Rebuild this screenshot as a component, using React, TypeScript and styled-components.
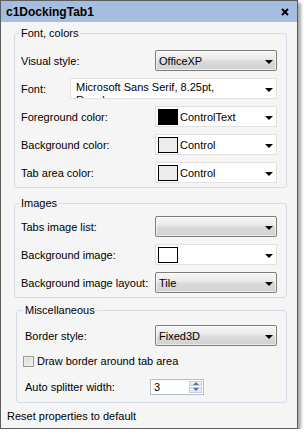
import styled, {createGlobalStyle} from "styled-components";

const GlobalStyle = createGlobalStyle`
  body {
    margin: 0;
    background: #ffffff;
    font-family: "Liberation Sans", Arial, sans-serif;
    font-size: 11px;
    color: #000;
  }
`;

const Window = styled.div`
  width: 298px;
  height: 429px;
  box-sizing: border-box;
  border: 1px solid #5c5c5c;
  background: #f5f5f5;
  box-shadow: 3px 3px 3px rgba(0, 0, 0, 0.35);
  display: flex;
  flex-direction: column;
`;

const TitleBar = styled.div`
  height: 21px;
  flex: none;
  background: #a5bddf;
  display: flex;
  align-items: center;
  justify-content: space-between;
  padding: 0 8px 0 5px;
  font-weight: bold;
  font-size: 12px;
`;

const CloseIcon = () => (
  <svg width="8" height="8" viewBox="0 0 8 8">
    <path d="M1 1 L7 7 M7 1 L1 7" stroke="#000" strokeWidth="2" />
  </svg>
);

const Content = styled.div`
  padding: 4px 10px 0 13px;
`;

const Group = styled.fieldset<{$top: number; $pt: number; $pb: number; $indent?: number}>`
  margin: ${(p) => p.$top}px 0 0 ${(p) => p.$indent ?? 0}px;
  min-inline-size: 0;
  border: 1px solid #d3dce7;
  border-radius: 3px;
  padding: ${(p) => p.$pt}px 9px ${(p) => p.$pb}px
    ${(p) => 6 + (p.$indent ?? 0)}px;
  display: flex;
  flex-direction: column;
  gap: 7px;
`;

const Legend = styled.legend`
  padding: 0 2px;
  margin-left: -2px;
  line-height: 14px;
`;

const Row = styled.div<{$h?: number}>`
  height: ${(p) => p.$h ?? 21}px;
  display: flex;
  align-items: center;
  justify-content: space-between;
`;

const Label = styled.span`
  white-space: nowrap;
`;

const Arrow = styled.span`
  position: absolute;
  right: 3px;
  top: 50%;
  margin-top: -1px;
  width: 0;
  height: 0;
  border-left: 4px solid transparent;
  border-right: 4px solid transparent;
  border-top: 4px solid #000;
`;

const Combo = styled.div<{$w?: number}>`
  position: relative;
  width: ${(p) => p.$w ?? 122}px;
  height: 21px;
  box-sizing: border-box;
  border: 1px solid #7d7d7d;
  border-radius: 2px;
  background: linear-gradient(#f7f7f7, #e8e8e8 45%, #dadada 55%, #d2d2d2);
  box-shadow: inset 0 0 0 1px rgba(255, 255, 255, 0.6);
  display: flex;
  align-items: center;
  padding-left: 3px;
  padding-right: 18px;
`;

const FlatCombo = styled(Combo)`
  border: 1px solid #e1e1e1;
  border-radius: 0;
  background: #ffffff;
  box-shadow: none;
  padding-left: 2px;
`;

const FontText = styled.div`
  height: 19px;
  overflow: hidden;
  padding: 2px 0 0 3px;
  box-sizing: border-box;
  align-self: flex-start;
  line-height: 13px;
`;

const Swatch = styled.span<{$color: string}>`
  width: 20px;
  height: 16px;
  box-sizing: border-box;
  border: 1px solid #000;
  background: ${(p) => p.$color};
  margin-right: 2px;
  flex: none;
`;

const CheckRow = styled.label`
  height: 16px;
  display: flex;
  align-items: center;
  margin-left: -2px;
  gap: 3px;
`;

const CheckBox = styled.span`
  width: 11px;
  height: 11px;
  box-sizing: border-box;
  border: 1px solid #9a9a9a;
  background: linear-gradient(135deg, #d6d6d6, #f4f4f4);
  box-shadow: inset 0 0 0 1px #ececec;
`;

const Spinner = styled.div`
  width: 54px;
  height: 16px;
  box-sizing: border-box;
  border: 1px solid #b4bfcc;
  background: #fff;
  display: flex;
  margin-right: 73px;
`;

const SpinValue = styled.span`
  flex: 1;
  padding-left: 3px;
  line-height: 14px;
`;

const SpinButtons = styled.div`
  width: 13px;
  margin: 1px 1px 1px 0;
  display: flex;
  flex-direction: column;
  gap: 1px;
`;

const SpinButton = styled.div<{$up?: boolean}>`
  flex: 1;
  background: linear-gradient(#f2f5f9, #dfe6ee);
  border: 1px solid #c5d0dc;
  display: flex;
  align-items: center;
  justify-content: center;
  &::after {
    content: "";
    border-left: 3px solid transparent;
    border-right: 3px solid transparent;
    ${(p) => (p.$up ? "border-bottom" : "border-top")}: 3px solid #4a78b0;
  }
`;

const Footer = styled.div`
  margin-top: 6px;
  padding-left: 6px;
  line-height: 14px;
`;

const ColorCombo = ({color, name}: {color: string; name: string}) => (
  <FlatCombo>
    <Swatch $color={color} />
    {name}
    <Arrow />
  </FlatCombo>
);

const App = () => {
  return (
    <>
      <GlobalStyle />
      <Window>
        <TitleBar>
          <span>c1DockingTab1</span>
          <CloseIcon />
        </TitleBar>
        <Content>
          <Group $top={0} $pt={10} $pb={4}>
            <Legend>Font, colors</Legend>
            <Row>
              <Label>Visual style:</Label>
              <Combo>
                OfficeXP
                <Arrow />
              </Combo>
            </Row>
            <Row>
              <Label>Font:</Label>
              <FlatCombo $w={207}>
                <FontText>
                  Microsoft Sans Serif, 8.25pt,
                  <br />
                  Regular
                </FontText>
                <Arrow />
              </FlatCombo>
            </Row>
            <Row>
              <Label>Foreground color:</Label>
              <ColorCombo color="#000000" name="ControlText" />
            </Row>
            <Row>
              <Label>Background color:</Label>
              <ColorCombo color="#ececec" name="Control" />
            </Row>
            <Row>
              <Label>Tab area color:</Label>
              <ColorCombo color="#ececec" name="Control" />
            </Row>
          </Group>

          <Group $top={8} $pt={6} $pb={4}>
            <Legend>Images</Legend>
            <Row>
              <Label>Tabs image list:</Label>
              <Combo>
                <Arrow />
              </Combo>
            </Row>
            <Row>
              <Label>Background image:</Label>
              <FlatCombo>
                <Swatch $color="#ffffff" />
                <Arrow />
              </FlatCombo>
            </Row>
            <Row>
              <Label>Background image layout:</Label>
              <Combo>
                Tile
                <Arrow />
              </Combo>
            </Row>
          </Group>

          <Group $top={5} $pt={8} $pb={5} $indent={2}>
            <Legend>Miscellaneous</Legend>
            <Row>
              <Label>Border style:</Label>
              <Combo>
                Fixed3D
                <Arrow />
              </Combo>
            </Row>
            <CheckRow>
              <CheckBox />
              Draw border around tab area
            </CheckRow>
            <Row>
              <Label>Auto splitter width:</Label>
              <Spinner>
                <SpinValue>3</SpinValue>
                <SpinButtons>
                  <SpinButton $up />
                  <SpinButton />
                </SpinButtons>
              </Spinner>
            </Row>
          </Group>
        </Content>
        <Footer>Reset properties to default</Footer>
      </Window>
    </>
  );
};

export default App;
